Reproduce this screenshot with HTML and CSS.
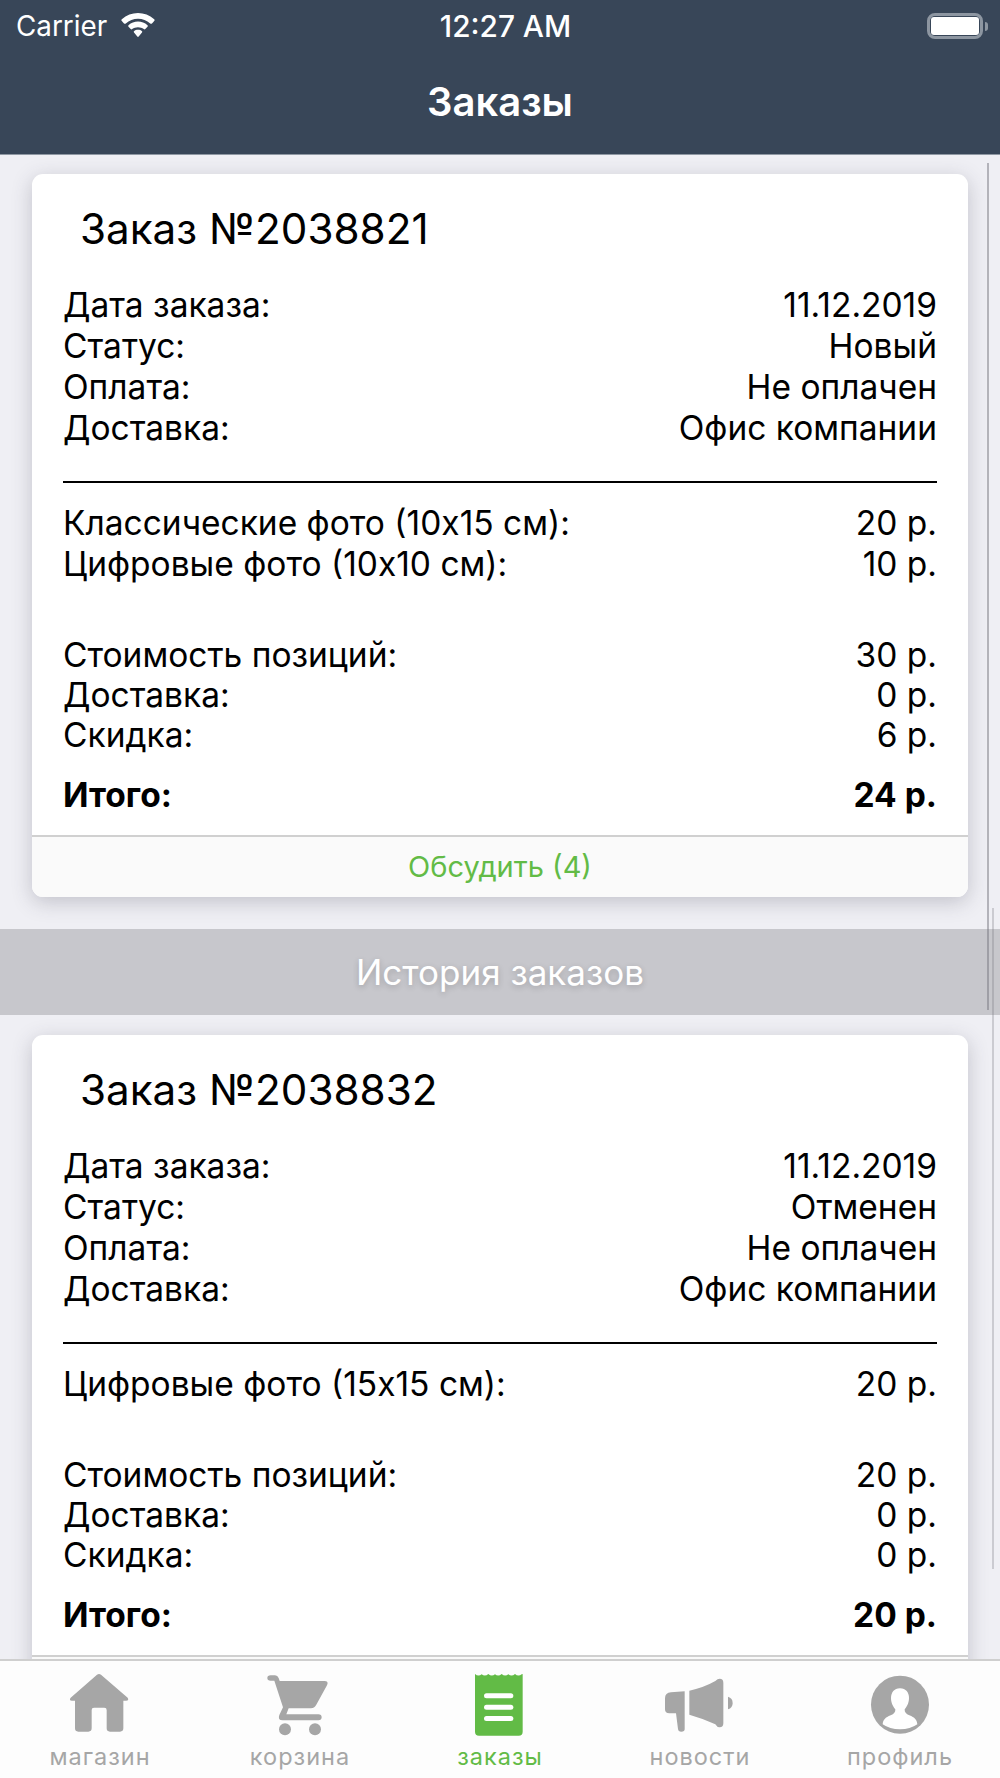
FILE: index.html
```html
<!DOCTYPE html>
<html lang="ru">
<head>
  <meta charset="UTF-8" />
  <meta name="viewport" content="width=device-width, initial-scale=1.0"/>
  <title>Заказы</title>
  <link rel="stylesheet" href="styles.css">
</head>
<body>

<div class="app">

  <!-- Header -->
  <div class="header">
    <div class="status-bar">
      <div class="status-left">
        <span>Carrier</span>
        <svg class="wifi" viewBox="0 0 34 24" width="34" height="24">
          <path d="M17 0C11 0 5.500 2.200 .8 6.300C.2 6.900 .2 7.500 .8 8.100L3 10.400C3.600 11 4.200 11 4.800 10.500C8.200 7.500 12.400 5.800 17 5.800S25.800 7.500 29.200 10.500C29.800 11 30.400 11 31 10.400L33.200 8.100C33.800 7.500 33.800 6.900 33.200 6.300C28.500 2.200 23 0 17 0Z" fill="#fff"/>
          <path d="M17 8.500C13.500 8.500 10.200 9.800 7.500 12.200C7 12.700 7 13.200 7.500 13.700L9.700 16C10.200 16.500 10.700 16.500 11.200 16.100C12.800 14.900 14.800 14.200 17 14.200S21.200 14.900 22.800 16.100C23.300 16.500 23.800 16.500 24.300 16L26.500 13.700C27 13.200 27 12.700 26.500 12.200C23.800 9.800 20.500 8.500 17 8.500Z" fill="#fff"/>
          <path d="M17 16.800C15.500 16.800 14.100 17.300 13 18.200C12.600 18.600 12.600 19 13 19.400L16.300 23.500C16.700 24 17.300 24 17.700 23.500L21 19.400C21.400 19 21.400 18.600 21 18.200C19.900 17.300 18.500 16.800 17 16.800Z" fill="#fff"/>
        </svg>
      </div>
      <div class="status-time">12:27 AM</div>
      <div class="status-right">
        <div class="battery"><div class="battery-fill"></div></div>
        <div class="battery-nub"></div>
      </div>
    </div>
    <div class="nav-title">Заказы</div>
  </div>

  <!-- Orders -->
  <div class="content">
    <div class="section">
      <div class="card">
        <div class="card-title">Заказ №2038821</div>
        <div class="rows">
          <div class="row"><span>Дата заказа:</span><span>11.12.2019</span></div>
          <div class="row"><span>Статус:</span><span>Новый</span></div>
          <div class="row"><span>Оплата:</span><span>Не оплачен</span></div>
          <div class="row"><span>Доставка:</span><span>Офис компании</span></div>
        </div>
        <div class="divider"></div>
        <div class="rows items">
          <div class="row"><span>Классические фото (10х15 см):</span><span>20 р.</span></div>
          <div class="row"><span>Цифровые фото (10х10 см):</span><span>10 р.</span></div>
        </div>
        <div class="rows summary">
          <div class="row"><span>Стоимость позиций:</span><span>30 р.</span></div>
          <div class="row"><span>Доставка:</span><span>0 р.</span></div>
          <div class="row"><span>Скидка:</span><span>6 р.</span></div>
        </div>
        <div class="row total"><span>Итого:</span><span>24 р.</span></div>
        <div class="card-footer">Обсудить (4)</div>
      </div>
    </div>

    <div class="history">История заказов</div>

    <div class="section">
      <div class="card">
        <div class="card-title">Заказ №2038832</div>
        <div class="rows">
          <div class="row"><span>Дата заказа:</span><span>11.12.2019</span></div>
          <div class="row"><span>Статус:</span><span>Отменен</span></div>
          <div class="row"><span>Оплата:</span><span>Не оплачен</span></div>
          <div class="row"><span>Доставка:</span><span>Офис компании</span></div>
        </div>
        <div class="divider"></div>
        <div class="rows items">
          <div class="row"><span>Цифровые фото (15х15 см):</span><span>20 р.</span></div>
        </div>
        <div class="rows summary">
          <div class="row"><span>Стоимость позиций:</span><span>20 р.</span></div>
          <div class="row"><span>Доставка:</span><span>0 р.</span></div>
          <div class="row"><span>Скидка:</span><span>0 р.</span></div>
        </div>
        <div class="row total"><span>Итого:</span><span>20 р.</span></div>
        <div class="card-footer"></div>
      </div>
    </div>

    <div class="scroll-line scroll-line-main"></div>
    <div class="scroll-line scroll-line-side"></div>
  </div>

  <!-- Tab bar -->
  <div class="tabbar">
    <a class="tab" href="#">
      <svg class="tab-icon" viewBox="201 123 198 198" width="66" height="66">
        <path d="M291 134Q297 130 303 134L383 203Q388 212 378 212H370V295Q370 305 360 305H330Q320 305 320 295V240Q320 233 313 233H282Q275 233 275 240V295Q275 305 265 305H235Q225 305 225 295V212H216Q206 212 212 203Z" fill="#a6a6a6"/>
      </svg>
      <span>магазин</span>
    </a>
    <a class="tab" href="#">
      <svg class="tab-icon" viewBox="801 123 198 198" width="66" height="66">
        <path d="M812 136H825Q833 136 836 144L839 153H973Q987 153 981 166L948 226Q943 235 933 235H866L859 253H955Q965 253 965 262Q965 271 955 271H848Q832 271 838 255L849 232L823 152H812Q802 152 802 144Q802 136 812 136Z" fill="#a6a6a6"/>
        <circle cx="855" cy="298" r="18" fill="#a6a6a6"/>
        <circle cx="945" cy="298" r="18" fill="#a6a6a6"/>
      </svg>
      <span>корзина</span>
    </a>
    <a class="tab tab-active" href="#">
      <svg class="tab-icon" viewBox="-99 123 198 198" width="66" height="66">
        <path d="M-75 132q10 9 20 1q10 8 20 -1q10 9 20 1q10 8 20 -1q10 9 20 1q10 8 20 -1q10 9 20 1l3 -1V305Q68 317 56 317H-63Q-75 317 -75 305Z" fill="#62bb46"/>
        <rect x="-48" y="190" width="88" height="15" rx="7.500" fill="#fff"/>
        <rect x="-48" y="224" width="88" height="15" rx="7.500" fill="#fff"/>
        <rect x="-48" y="258" width="88" height="15" rx="7.500" fill="#fff"/>
      </svg>
      <span>заказы</span>
    </a>
    <a class="tab" href="#">
      <svg class="tab-icon" viewBox="489 123 216 198" width="72" height="66">
        <path d="M551 184V298Q551 305 541 305Q532 305 531 297L525 250H505Q492 250 492 238V205Q492 188 510 187Z" fill="#a6a6a6"/>
        <path d="M565 182Q610 172 643 153Q650 146 656 146Q667 146 667 158V280Q667 292 656 292Q648 292 643 283Q605 265 565 254Z" fill="#a6a6a6"/>
        <path d="M681 200Q695 204 695 219Q695 234 681 238Z" fill="#a6a6a6"/>
      </svg>
      <span>новости</span>
    </a>
    <a class="tab" href="#">
      <svg class="tab-icon" viewBox="1095 123 198 198" width="66" height="66">
        <circle cx="1194" cy="224" r="87" fill="#a6a6a6"/>
        <path d="M1194 175C1212 175 1221 188 1221 204C1221 220 1213 232 1208 238Q1207 250 1222 256C1238 262 1245 270 1246 283Q1225 298 1194 298Q1163 298 1142 283C1143 270 1150 262 1166 256Q1181 250 1180 238C1175 232 1167 220 1167 204C1167 188 1176 175 1194 175Z" fill="#fff"/>
      </svg>
      <span>профиль</span>
    </a>
  </div>

</div>

</body>
</html>
```

FILE: styles.css
```css
* {
  box-sizing: border-box;
}

body {
  font-family: Inter, "Liberation Sans", sans-serif;
  margin: 0;
  color: #000;
  background-color: #efeff4;
}

.app {
  display: flex;
  flex-direction: column;
  height: 100vh;
  overflow: hidden;
}

/* Header */
.header {
  background-color: #384658;
  color: white;
  height: 155px;
  flex-shrink: 0;
  border-bottom: 1px solid #8f98a3;
}

.status-bar {
  display: grid;
  grid-template-columns: 1fr auto 1fr;
  align-items: center;
  height: 52px;
  padding: 0 12px 0 16px;
  font-size: 27.800px;
}

.status-time {
  font-size: 29.800px;
  font-weight: 500;
  margin-left: 7px;
}

.status-left {
  display: flex;
  align-items: center;
  gap: 14px;
}

.wifi {
  margin-top: -2px;
}

.status-right {
  display: flex;
  align-items: center;
  justify-content: flex-end;
  gap: 2px;
}

.battery {
  width: 56px;
  height: 26px;
  border: 3px solid #8d96a1;
  border-radius: 8px;
  padding: 1px;
}

.battery-fill {
  height: 100%;
  background-color: white;
  border-radius: 3px;
}

.battery-nub {
  width: 3px;
  height: 9px;
  background-color: #8d96a1;
  border-radius: 0 3px 3px 0;
}

.nav-title {
  text-align: center;
  font-size: 40px;
  font-weight: 600;
  line-height: 44px;
  margin-top: 28px;
}

/* Orders */
.content {
  flex: 1;
  overflow: hidden;
  position: relative;
}

.section {
  padding: 19px 32px 32px;
}

.card {
  background-color: white;
  border-radius: 11px;
  box-shadow: 0 5px 20px rgba(60, 60, 80, 0.25);
  overflow: hidden;
}

.card-title {
  font-size: 42.200px;
  line-height: 48px;
  padding: 31px 48px 0;
  margin-bottom: 32px;
}

.rows {
  padding: 0 31px;
}

.row {
  display: flex;
  justify-content: space-between;
  font-size: 33.500px;
  line-height: 41px;
}

.summary .row {
  line-height: 40px;
}

.divider {
  height: 2px;
  background-color: #000;
  margin: 32px 31px 20px;
}

.items {
  margin-bottom: 50px;
}

.total {
  font-weight: 700;
  padding: 0 31px;
  margin-top: 20px;
  margin-bottom: 19px;
}

.card-footer {
  background-color: #fafafa;
  border-top: 2px solid #d0d0d0;
  color: #62bb46;
  text-align: center;
  font-size: 29px;
  line-height: 60px;
  min-height: 62px;
}

.history {
  background-color: #c7c7cc;
  color: white;
  text-align: center;
  height: 86px;
  line-height: 86px;
  font-size: 35px;
  text-shadow: 0 2px 6px rgba(0, 0, 0, 0.2);
}

.history + .section {
  padding-top: 20px;
}

/* Scroll indicators over the list */
.scroll-line {
  position: absolute;
  width: 2px;
  background-color: rgba(120, 120, 128, 0.5);
}

.scroll-line-main {
  right: 11px;
  top: 8px;
  height: 847px;
}

.scroll-line-side {
  right: 6px;
  top: 753px;
  height: 661px;
  background-color: rgba(120, 120, 128, 0.3);
}

/* Tab bar */
.tabbar {
  flex-shrink: 0;
  height: 119px;
  background-color: #fdfdfd;
  border-top: 2px solid #cfcfcf;
  display: grid;
  grid-template-columns: repeat(5, 1fr);
}

.tab {
  display: flex;
  flex-direction: column;
  align-items: center;
  color: #a6a6a6;
  text-decoration: none;
  font-size: 23.500px;
  letter-spacing: 1px;
  line-height: 26px;
  padding-top: 10px;
}

.tab-active {
  color: #62bb46;
}

.tab-icon {
  margin-bottom: 7px;
}
```
